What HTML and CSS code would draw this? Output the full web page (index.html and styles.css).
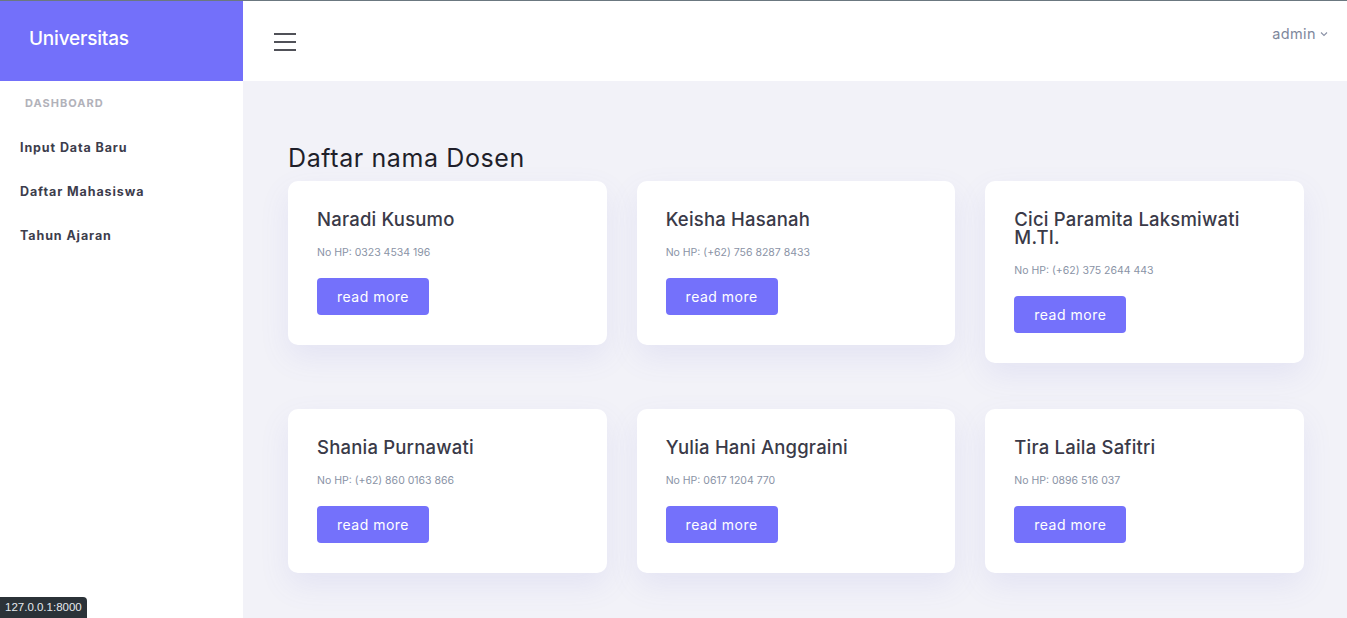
FILE: index.html
```html
<!DOCTYPE html>
<html lang="id">
<head>
<meta charset="utf-8">
<title>Universitas</title>
<link rel="stylesheet" href="styles.css">
</head>
<body>
<div class="app">
  <aside class="sidebar">
    <div class="brand">Universitas</div>
    <div class="menu-title">DASHBOARD</div>
    <nav class="menu">
      <a class="menu-item" href="#">Input Data Baru</a>
      <a class="menu-item" href="#">Daftar Mahasiswa</a>
      <a class="menu-item" href="#">Tahun Ajaran</a>
    </nav>
  </aside>
  <div class="main">
    <header class="topbar">
      <button class="burger" aria-label="menu">
        <span></span><span></span><span></span>
      </button>
      <div class="user">admin
        <svg class="chev" width="8" height="6" viewBox="0 0 8 6"><path d="M1 1.5 L4 4.5 L7 1.5" fill="none" stroke="#8a91a6" stroke-width="1.1"/></svg>
      </div>
    </header>
    <section class="content">
      <h1 class="title">Daftar nama Dosen</h1>
      <div class="grid">
        <div class="card"><h2 class="name">Naradi Kusumo</h2><p class="phone">No HP: 0323 4534 196</p><a class="btn" href="#">read more</a></div>
        <div class="card"><h2 class="name">Keisha Hasanah</h2><p class="phone">No HP: (+62) 756 8287 8433</p><a class="btn" href="#">read more</a></div>
        <div class="card"><h2 class="name">Cici Paramita Laksmiwati M.TI.</h2><p class="phone">No HP: (+62) 375 2644 443</p><a class="btn" href="#">read more</a></div>
        <div class="card"><h2 class="name">Shania Purnawati</h2><p class="phone">No HP: (+62) 860 0163 866</p><a class="btn" href="#">read more</a></div>
        <div class="card"><h2 class="name">Yulia Hani Anggraini</h2><p class="phone">No HP: 0617 1204 770</p><a class="btn" href="#">read more</a></div>
        <div class="card"><h2 class="name">Tira Laila Safitri</h2><p class="phone">No HP: 0896 516 037</p><a class="btn" href="#">read more</a></div>
      </div>
    </section>
  </div>
</div>
<div class="status">127.0.0.1:8000</div>
</body>
</html>
```
FILE: styles.css
```css
* { box-sizing: border-box; }
html, body { margin: 0; height: 100%; }
body {
  font-family: Inter, "Open Sans", sans-serif;
  background: #f2f2f8;
  border-top: 1px solid #6b7880;
  overflow: hidden;
}
.app { display: flex; height: 617px; }
.sidebar { width: 243px; flex: none; background: #fff; }
.brand {
  height: 80px;
  background: #7370fa;
  color: #fff;
  font-size: 19px;
  font-weight: 500;
  letter-spacing: -0.2px;
  padding: 0 0 6px 29px;
  display: flex;
  align-items: center;
}
.menu-title {
  padding: 15px 0 0 25px;
  font-size: 11px;
  font-weight: 700;
  color: #b2b2ba;
  letter-spacing: 1px;
  height: 45px;
}
.menu { display: flex; flex-direction: column; }
.menu-item {
  display: block;
  padding-left: 20px;
  height: 44px;
  line-height: 44px;
  font-size: 12.5px;
  font-weight: 700;
  color: #3d3d4c;
  letter-spacing: 0.9px;
  text-decoration: none;
}
.main { flex: 1; display: flex; flex-direction: column; }
.topbar {
  height: 80px;
  background: #fff;
  display: flex;
  justify-content: space-between;
  align-items: flex-start;
  padding: 0 19px 0 31px;
}
.burger {
  margin-top: 32px;
  width: 22px;
  height: 18px;
  border: 0;
  background: none;
  padding: 0;
  display: flex;
  flex-direction: column;
  justify-content: space-between;
}
.burger span { display: block; height: 2px; width: 22px; background: #505158; }
.user {
  margin-top: 24px;
  font-size: 14.5px;
  letter-spacing: 0.4px;
  color: #7e879c;
  display: flex;
  align-items: center;
  gap: 4px;
}
.chev { margin-top: 1px; }
.content { padding: 62px 43px 0 45px; }
.title {
  margin: 0 0 8px;
  font-size: 25px;
  font-weight: 400;
  letter-spacing: 0.6px;
  color: #1f1f2a;
  line-height: 30px;
}
.grid {
  display: grid;
  grid-template-columns: repeat(3, 1fr);
  column-gap: 30px;
  row-gap: 46px;
  align-items: start;
}
.card {
  background: #fff;
  border-radius: 10px;
  padding: 29px 29px 30px;
  box-shadow: 0 12px 30px rgba(110, 105, 210, 0.10);
}
.name {
  margin: 0;
  font-size: 18.5px;
  font-weight: 500;
  letter-spacing: 0.2px;
  line-height: 18px;
  color: #3a3a48;
}
.phone {
  margin: 17px 0 17px;
  font-size: 10.5px;
  color: #8a93a6;
  line-height: 16px;
}
.btn {
  display: inline-flex;
  align-items: center;
  justify-content: center;
  width: 112px;
  height: 37px;
  background: #7471fb;
  color: #fff;
  font-size: 14px;
  letter-spacing: 0.5px;
  border-radius: 4px;
  text-decoration: none;
}
.status {
  position: fixed;
  left: 0;
  bottom: 0;
  height: 21px;
  padding: 0 5px;
  background: #2b3238;
  color: #e4e9ee;
  font-family: "Liberation Sans", Arial, sans-serif;
  font-size: 11.5px;
  line-height: 21px;
  border-top-right-radius: 4px;
}
```
